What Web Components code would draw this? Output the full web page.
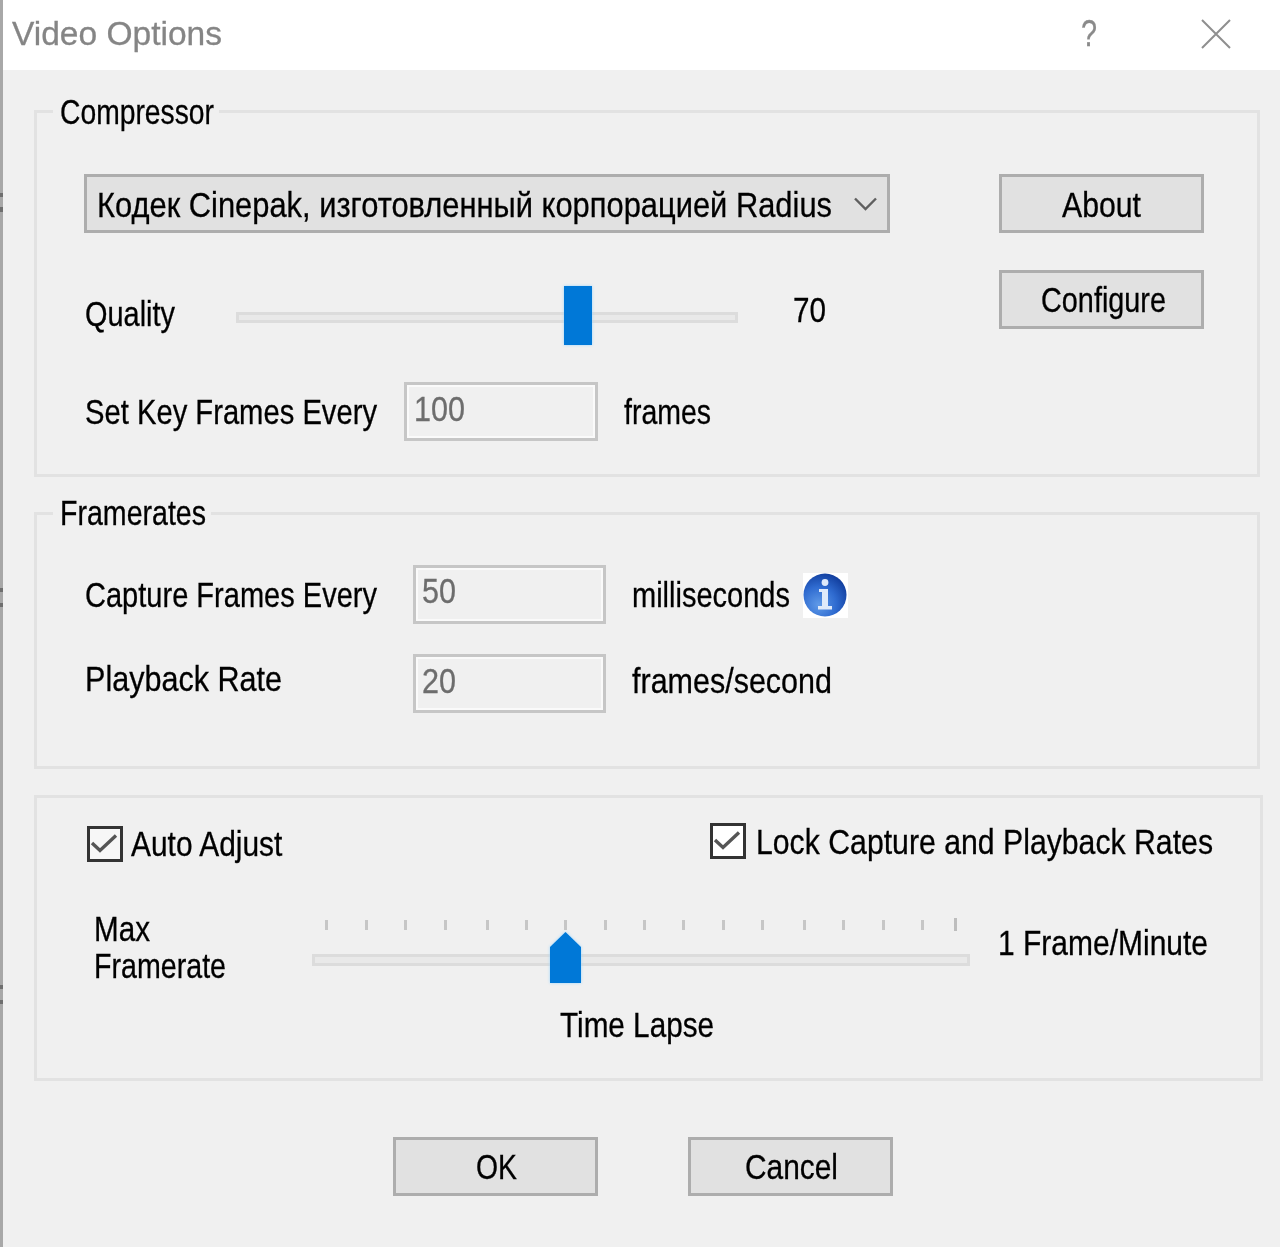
<!DOCTYPE html>
<html lang="en">
<head>
<meta charset="utf-8">
<title>Video Options</title>
<style>
html,body{margin:0;padding:0;background:#f0f0f0;}
</style>
</head>
<body>
<video-options-dialog></video-options-dialog>
<script>
const ctx = document.createElement('canvas').getContext('2d');

/* Text squeezed horizontally to the exact width of the bitmap font in the reference */
class WinText extends HTMLElement {
  connectedCallback() {
    if (this.shadowRoot) return;
    const fs = +(this.getAttribute('fs') || 35);
    const w = +this.getAttribute('w');
    const color = this.getAttribute('color') || '#000';
    const lh = +(this.getAttribute('lh') || 40);
    const blur = this.getAttribute('blur') || '.35';
    ctx.font = fs + 'px "Liberation Sans"';
    const natural = ctx.measureText(this.textContent).width;
    const sx = w / natural;
    this.attachShadow({mode:'open'}).innerHTML = `
      <style>
        :host{display:block;flex:none;width:${w}px;height:${lh}px;}
        span{display:inline-block;white-space:nowrap;font:${fs}px/${lh}px "Liberation Sans",Arial,sans-serif;color:${color};
             -webkit-text-stroke:.3px ${color};transform-origin:0 0;transform:scaleX(${sx});filter:blur(${blur}px);}
      </style><span><slot></slot></span>`;
  }
}

class WinGroup extends HTMLElement {
  constructor() {
    super();
    const legend = this.hasAttribute('legend');
    this.attachShadow({mode:'open'}).innerHTML = `
      <style>
        :host{display:block;}
        fieldset{display:block;margin:0;padding:0;box-sizing:border-box;min-width:0;width:100%;height:100%;border:3px solid #e2e2e2;}
        legend{margin-left:16px;padding:0 5px 0 7px;}
      </style>
      <fieldset>${legend ? '<legend><slot name="legend"></slot></legend>' : ''}<slot></slot></fieldset>`;
  }
}

class WinButton extends HTMLElement {
  constructor() {
    super();
    this.attachShadow({mode:'open'}).innerHTML = `
      <style>
        :host{display:flex;justify-content:center;align-items:flex-start;flex:none;box-sizing:border-box;width:205px;height:59px;
              border:3px solid #adadad;background:#e1e1e1;padding:var(--pt,6px) 0 0 var(--pl,0);}
      </style><slot></slot>`;
  }
}

class WinCombo extends HTMLElement {
  constructor() {
    super();
    this.attachShadow({mode:'open'}).innerHTML = `
      <style>
        :host{display:flex;justify-content:space-between;align-items:flex-start;box-sizing:border-box;width:806px;height:59px;
              border:3px solid #adadad;background:#e1e1e1;padding:8px 10px 0 10px;}
        svg{display:block;margin-top:12px;filter:blur(.3px);}
      </style>
      <slot></slot>
      <svg width="23" height="14" viewBox="0 0 23 14"><polyline points="1,1.5 11.5,12 22,1.5" fill="none" stroke="#5f5f5f" stroke-width="2.4"/></svg>`;
  }
}

class WinField extends HTMLElement {
  constructor() {
    super();
    this.attachShadow({mode:'open'}).innerHTML = `
      <style>
        :host{display:block;flex:none;box-sizing:border-box;height:59px;border:3px solid #c6c6c6;background:#f0f0f0;
              box-shadow:inset 0 0 0 2px #fafafa;padding:var(--pt,3px) 0 0 var(--pl,6px);}
      </style><slot></slot>`;
  }
}

class WinSlider extends HTMLElement {
  constructor() {
    super();
    const ticks = this.getAttribute('ticks');
    const tickSvg = ticks ? `<svg class="ticks" width="658" height="14" viewBox="0 0 658 14">${
      ticks.split(',').map((x,i,a)=> i===a.length-1
        ? `<rect x="${x}" y="0" width="3" height="13" fill="#bdbdbd"/>`
        : `<rect x="${x}" y="2" width="3" height="10" fill="#c6c6c6"/>`).join('')}</svg>` : '';
    const arrow = `<svg class="thumb" width="31" height="51" viewBox="0 0 31 51"><polygon points="0,15 15.5,0 31,15 31,51 0,51" fill="#0078d7"/></svg>`;
    const rect = `<div class="thumb rect"></div>`;
    this.attachShadow({mode:'open'}).innerHTML = `
      <style>
        :host{display:block;flex:none;position:relative;width:var(--w);height:var(--h);}
        .track{position:absolute;left:0;right:0;top:var(--tt);height:var(--th);box-sizing:border-box;border:3px solid #dcdcdc;background:#e9e9e9;}
        .ticks{position:absolute;left:0;top:0;display:block;filter:blur(.3px);}
        .thumb{position:absolute;left:var(--tl);top:var(--tp);display:block;filter:drop-shadow(0 0 1.5px #9bd6ff);}
        .rect{width:28px;height:59px;background:#0078d7;}
      </style>
      ${tickSvg}<div class="track"></div>${ticks ? arrow : rect}`;
  }
}

class WinCheck extends HTMLElement {
  constructor() {
    super();
    this.attachShadow({mode:'open'}).innerHTML = `
      <style>
        :host{display:block;flex:none;box-sizing:border-box;width:36px;height:36px;border:3px solid #333;background:var(--bg,#fff);}
        svg{display:block;filter:blur(.4px);}
      </style>
      <svg width="30" height="30" viewBox="0 0 30 30"><polyline points="2,14 10,21.5 26,6.5" fill="none" stroke="#555" stroke-width="3.4"/></svg>`;
  }
}

class WinInfoIcon extends HTMLElement {
  constructor() {
    super();
    this.attachShadow({mode:'open'}).innerHTML = `
      <style>:host{display:block;flex:none;width:45px;height:45px;background:#fff;} svg{display:block;filter:blur(.6px);}</style>
      <svg width="45" height="45" viewBox="0 0 45 45">
        <defs><radialGradient id="g" cx=".35" cy=".72" r=".75">
          <stop offset="0" stop-color="#5f9ae8"/><stop offset=".55" stop-color="#2f6bd0"/><stop offset="1" stop-color="#123f9f"/>
        </radialGradient></defs>
        <circle cx="22" cy="22" r="21.5" fill="url(#g)"/>
        <circle cx="22" cy="9.5" r="3.4" fill="#dfeafa"/>
        <rect x="16" y="16" width="9" height="3" fill="#dfeafa"/>
        <rect x="19" y="16" width="6" height="19" fill="#dfeafa"/>
        <rect x="15" y="33" width="14" height="3.5" fill="#dfeafa"/>
      </svg>`;
  }
}

class WinTitlebar extends HTMLElement {
  constructor() {
    super();
    this.attachShadow({mode:'open'}).innerHTML = `
      <style>
        :host{display:flex;align-items:flex-start;height:70px;background:#fff;box-sizing:border-box;padding:13px 0 0 9px;}
        svg{display:block;margin:6px 0 0 104px;filter:blur(.4px);}
      </style>
      <slot></slot>
      <svg width="30" height="30" viewBox="0 0 30 30"><path d="M1 1L29 29M29 1L1 29" fill="none" stroke="#8f8f8f" stroke-width="2"/></svg>`;
  }
}

class VideoOptionsDialog extends HTMLElement {
  constructor() {
    super();
    this.attachShadow({mode:'open'}).innerHTML = `
      <style>
        :host{display:flex;width:1280px;height:1247px;background:#f0f0f0;overflow:hidden;}
        .edge{flex:none;width:3px;background:linear-gradient(#a8a8a8 0 193px,#6f6f6f 193px 197px,#a8a8a8 197px 207px,#6f6f6f 207px 212px,#a8a8a8 212px 588px,#6f6f6f 588px 592px,#a8a8a8 592px 603px,#6f6f6f 603px 607px,#a8a8a8 607px 985px,#6f6f6f 985px 989px,#a8a8a8 989px 1000px,#6f6f6f 1000px 1004px,#a8a8a8 1004px);}
        .main{flex:1;min-width:0;}
        .content{padding:21px 0 0 31px;}
        .g1{width:1226px;height:386px;}
        .g2{width:1226px;height:276px;margin-top:16px;}
        .g3{width:1229px;height:286px;margin-top:26px;}
        .cols{display:grid;grid-template-columns:915px 205px;padding-left:47px;}
        .row{display:flex;align-items:flex-start;}
        .pad48{padding-left:48px;}
        .footer{display:flex;gap:90px;padding:56px 0 0 359px;}
      </style>
      <div class="edge"></div>
      <div class="main">
        <win-titlebar>
          <win-text w="210" fs="34" color="#858585" blur=".6">Video Options</win-text>
          <win-text w="16" fs="36" color="#8a8a8a" blur=".5" style="margin:1px 0 0 859px">?</win-text>
        </win-titlebar>
        <div class="content">
          <win-group class="g1" legend>
            <win-text slot="legend" w="154" style="margin:1px 0 -1px">Compressor</win-text>
            <div class="cols">
              <div>
                <win-combo style="margin-top:43px"><win-text w="735">Кодек Cinepak, изготовленный корпорацией Radius</win-text></win-combo>
                <div class="row" style="margin-top:53px;height:59px">
                  <win-text w="90" style="margin:8px 0 0 1px">Quality</win-text>
                  <win-slider style="--w:502px;--h:59px;--tt:26px;--th:11px;--tl:328px;--tp:0;margin-left:61px"></win-slider>
                  <win-text w="33" style="margin:4px 0 0 55px">70</win-text>
                </div>
                <div class="row" style="margin-top:37px">
                  <win-text w="292" style="margin:10px 0 0 1px">Set Key Frames Every</win-text>
                  <win-field style="width:194px;margin-left:27px;--pt:4px;--pl:7px"><win-text w="51" color="#6d6d6d">100</win-text></win-field>
                  <win-text w="87" style="margin:10px 0 0 26px">frames</win-text>
                </div>
              </div>
              <div>
                <win-button style="margin-top:43px;--pt:8px"><win-text w="79">About</win-text></win-button>
                <win-button style="margin-top:37px;--pt:7px;--pl:4px"><win-text w="125">Configure</win-text></win-button>
              </div>
            </div>
          </win-group>
          <win-group class="g2" legend>
            <win-text slot="legend" w="146">Framerates</win-text>
            <div class="row pad48" style="margin-top:32px">
              <win-text w="292" style="margin-top:10px">Capture Frames Every</win-text>
              <win-field style="width:193px;margin-left:36px"><win-text w="34" color="#6d6d6d">50</win-text></win-field>
              <win-text w="158" style="margin:10px 0 0 26px">milliseconds</win-text>
              <win-info-icon style="margin:8px 0 0 13px"></win-info-icon>
            </div>
            <div class="row pad48" style="margin-top:30px">
              <win-text w="197" style="margin-top:5px">Playback Rate</win-text>
              <win-field style="width:193px;margin-left:131px;--pt:4px"><win-text w="34" color="#6d6d6d">20</win-text></win-field>
              <win-text w="200" style="margin:7px 0 0 26px">frames/second</win-text>
            </div>
          </win-group>
          <win-group class="g3">
            <div class="row" style="margin-top:23px;padding-left:50px;height:42px">
              <div class="row" style="width:623px">
                <win-check style="margin-top:5px;--bg:#f7f7f7"></win-check>
                <win-text w="153" style="margin:3px 0 0 8px">Auto Adjust</win-text>
              </div>
              <div class="row">
                <win-check style="margin-top:2px"></win-check>
                <win-text w="457" style="margin:1px 0 0 10px">Lock Capture and Playback Rates</win-text>
              </div>
            </div>
            <div class="row" style="margin-top:46px;padding-left:57px">
              <div style="width:218px;flex:none;padding-top:1px">
                <win-text w="56" lh="37">Max</win-text>
                <win-text w="132" lh="37">Framerate</win-text>
              </div>
              <win-slider ticks="13,53,92,132,174,213,252,292,331,370,410,449,491,530,570,609,642" style="--w:658px;--h:65px;--tt:36px;--th:12px;--tl:238px;--tp:14px;margin-top:9px"></win-slider>
              <win-text w="210" style="margin:14px 0 0 28px">1 Frame/Minute</win-text>
            </div>
            <win-text w="154" style="margin:21px 0 0 523px">Time Lapse</win-text>
          </win-group>
          <div class="footer">
            <win-button style="--pt:7px;--pl:2px"><win-text w="41">OK</win-text></win-button>
            <win-button style="--pt:7px;--pl:2px"><win-text w="93">Cancel</win-text></win-button>
          </div>
        </div>
      </div>`;
  }
}

customElements.define('win-text', WinText);
customElements.define('win-group', WinGroup);
customElements.define('win-button', WinButton);
customElements.define('win-combo', WinCombo);
customElements.define('win-field', WinField);
customElements.define('win-slider', WinSlider);
customElements.define('win-check', WinCheck);
customElements.define('win-info-icon', WinInfoIcon);
customElements.define('win-titlebar', WinTitlebar);
customElements.define('video-options-dialog', VideoOptionsDialog);
</script>
</body>
</html>
